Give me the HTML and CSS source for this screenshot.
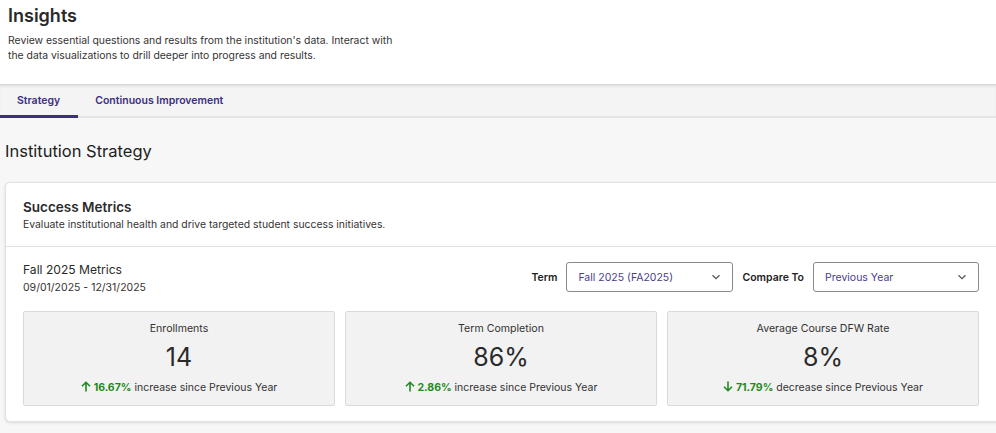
FILE: index.html
```html
<!DOCTYPE html>
<html lang="en">
<head>
  <meta charset="UTF-8" />
  <meta name="viewport" content="width=device-width, initial-scale=1.0"/>
  <title>Insights</title>
  <link rel="stylesheet" href="styles.css">
</head>
<body>
  <header class="page-head">
    <h1>Insights</h1>
    <p>Review essential questions and results from the institution's data. Interact with<br>the data visualizations to drill deeper into progress and results.</p>
  </header>

  <nav class="tabs">
    <a class="tab active">Strategy</a>
    <a class="tab">Continuous Improvement</a>
  </nav>

  <main class="content">
    <h2 class="section-title">Institution Strategy</h2>

    <section class="card">
      <div class="card-head">
        <h3>Success Metrics</h3>
        <p>Evaluate institutional health and drive targeted student success initiatives.</p>
      </div>
      <div class="card-body">
        <div class="toolbar">
          <div class="period">
            <div class="period-name">Fall 2025 Metrics</div>
            <div class="period-dates">09/01/2025 - 12/31/2025</div>
          </div>
          <div class="filters">
            <label>Term</label>
            <div class="select term">
              <span>Fall 2025 (FA2025)</span>
              <svg width="10" height="6" viewBox="0 0 10 6"><path d="M1.5 1.2 5 4.6 8.5 1.2" fill="none" stroke="#555" stroke-width="1.2"/></svg>
            </div>
            <label>Compare To</label>
            <div class="select compare">
              <span>Previous Year</span>
              <svg width="10" height="6" viewBox="0 0 10 6"><path d="M1.5 1.2 5 4.6 8.5 1.2" fill="none" stroke="#555" stroke-width="1.2"/></svg>
            </div>
          </div>
        </div>

        <div class="metrics">
          <div class="metric">
            <div class="metric-title">Enrollments</div>
            <div class="metric-value">14</div>
            <div class="metric-change">
              <svg class="arrow" width="10" height="11" viewBox="0 0 10 11"><path d="M5 10.5V1.5M1 5.3 5 1.3 9 5.3" fill="none" stroke="#1f8a22" stroke-width="1.6"/></svg>
              <b>16.67%</b> increase since Previous Year
            </div>
          </div>
          <div class="metric">
            <div class="metric-title">Term Completion</div>
            <div class="metric-value">86%</div>
            <div class="metric-change">
              <svg class="arrow" width="10" height="11" viewBox="0 0 10 11"><path d="M5 10.5V1.5M1 5.3 5 1.3 9 5.3" fill="none" stroke="#1f8a22" stroke-width="1.6"/></svg>
              <b>2.86%</b> increase since Previous Year
            </div>
          </div>
          <div class="metric">
            <div class="metric-title">Average Course DFW Rate</div>
            <div class="metric-value">8%</div>
            <div class="metric-change">
              <svg class="arrow" width="10" height="11" viewBox="0 0 10 11"><path d="M5 0.5V9.5M1 5.7 5 9.7 9 5.7" fill="none" stroke="#1f8a22" stroke-width="1.6"/></svg>
              <b>71.79%</b> decrease since Previous Year
            </div>
          </div>
        </div>
      </div>
    </section>
  </main>
</body>
</html>
```

FILE: styles.css
```css
:root {
  --text: #2a2a2a;
  --purple: #3b2f80;
  --green: #1f8a22;
}
body {
  font-family: Inter, 'Noto Sans', sans-serif;
  margin: 0;
  color: var(--text);
  background: #f7f7f7;
  overflow-x: hidden;
}
.page-head {
  background: #fff;
  padding: 5px 8px 0;
  height: 79px;
}
.page-head h1 {
  font-size: 18px;
  font-weight: 600;
  margin: 0;
  line-height: 22px;
}
.page-head p {
  font-size: 10.4px;
  line-height: 15px;
  margin: 6px 0 0;
  color: #333;
}
.tabs {
  display: flex;
  background: #f4f4f4;
  border-top: 1px solid #d6d6d6;
  box-shadow: inset 0 2px 2px rgba(0,0,0,0.06);
  border-bottom: 2px solid #e4e4e4;
  height: 31px;
}
.tab {
  font-size: 10.5px;
  font-weight: 600;
  color: var(--purple);
  padding: 0 18px 0 17px;
  line-height: 31px;
  border-bottom: 3px solid transparent;
  margin-bottom: -2px;
}
.tab.active {
  border-bottom-color: var(--purple);
}
.content {
  padding: 22px 0 12px 5px;
}
.section-title {
  font-size: 16.5px;
  font-weight: 400;
  margin: 0 0 20px;
  line-height: 22px;
  color: #222;
}
.card {
  background: #fff;
  border: 1px solid #e2e2e2;
  border-radius: 5px;
  box-shadow: 0 1px 3px rgba(0,0,0,0.12);
  margin-right: -8px;
}
.card-head {
  padding: 16px 17px 14px;
  border-bottom: 1px solid #e2e2e2;
}
.card-head h3 {
  font-size: 13.5px;
  font-weight: 600;
  margin: 0;
  line-height: 17px;
}
.card-head p {
  font-size: 10.4px;
  margin: 1px 0 0;
  line-height: 15px;
  color: #333;
}
.card-body {
  padding: 15px 24px 15px 17px;
}
.toolbar {
  display: flex;
  justify-content: space-between;
  align-items: flex-start;
}
.period-name {
  font-size: 12.1px;
  line-height: 16px;
}
.period-dates {
  font-size: 10.5px;
  line-height: 14px;
  margin-top: 3px;
  color: #333;
}
.filters {
  display: flex;
  align-items: center;
  gap: 9px;
}
.filters label {
  font-size: 10.5px;
  font-weight: 600;
  color: #222;
}
.select {
  display: flex;
  align-items: center;
  justify-content: space-between;
  border: 1px solid #8a8a8a;
  border-radius: 3px;
  padding: 0 11px;
  font-size: 10.5px;
  color: #4a3d8f;
  box-sizing: border-box;
  height: 30px;
}
.select.term {
  width: 167px;
}
.select.compare {
  width: 166px;
}
.metrics {
  display: grid;
  grid-template-columns: repeat(3, 1fr);
  gap: 10px;
  margin-top: 16px;
}
.metric {
  background: #f2f2f2;
  border: 1px solid #dadada;
  border-radius: 2px;
  text-align: center;
  padding: 9px 0 10px;
}
.metric-title {
  font-size: 10.6px;
  line-height: 15px;
  color: #333;
}
.metric-value {
  font-size: 25px;
  line-height: 30px;
  margin-top: 6px;
  color: #2a2a2a;
}
.metric-change {
  font-size: 10.5px;
  line-height: 15px;
  margin-top: 8px;
  color: #333;
}
.metric-change b {
  color: var(--green);
  font-weight: 700;
}
.arrow {
  vertical-align: -1px;
}
```
